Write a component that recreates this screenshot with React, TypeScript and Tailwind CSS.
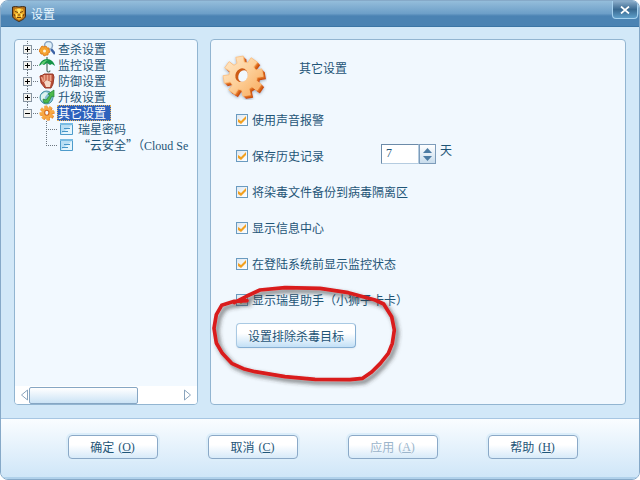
import React, { useState } from "react";
import clsx from "clsx";

const TREE = [
  { label: "查杀设置", Icon: ScanIcon },
  { label: "监控设置", Icon: UmbrellaIcon },
  { label: "防御设置", Icon: GloveIcon },
  { label: "升级设置", Icon: GlobeIcon },
  { label: "其它设置", Icon: SmallGearIcon },
];

const OPTIONS = [
  "使用声音报警",
  "保存历史记录",
  "将染毒文件备份到病毒隔离区",
  "显示信息中心",
  "在登陆系统前显示监控状态",
  "显示瑞星助手（小狮子卡卡）",
];

const ACTIONS = [
  { label: "确定", hotkey: "O" },
  { label: "取消", hotkey: "C" },
  { label: "应用", hotkey: "A", disabled: true },
  { label: "帮助", hotkey: "H" },
];

// eight-toothed gear around 24,24
function gearPath(outer: number, inner: number) {
  const at = (r: number, deg: number) => {
    const a = (deg * Math.PI) / 180;
    return `${(24 + r * Math.cos(a)).toFixed(1)} ${(24 + r * Math.sin(a)).toFixed(1)}`;
  };
  const points: string[] = [];
  for (let i = 0; i < 8; i++) {
    const mid = -100 + i * 45;
    points.push(at(inner, mid - 15), at(outer, mid - 11), at(outer, mid + 11), at(inner, mid + 15));
  }
  return `M${points.join("L")}z`;
}

const GEAR = gearPath(20, 14);

function LionIcon() {
  return (
    <svg className="h-4 w-4" viewBox="0 0 16 16" aria-hidden>
      <path d="M1.500 1l3-.5L8 1l3.500-.5 3 .5v9c0 2-3 4-6.500 5.500C4.500 14 1.500 12 1.500 10z" fill="#b8731a" stroke="#3d2a1a" />
      <path d="M4 3l4-1 4 1 1 4-2 5-3 2-3-2-2-5z" fill="#f2b42c" />
      <path d="M6 3h4l-1 4H7zM5 8h1v3H5zM10 8h1v3h-1z" fill="#ffe36a" />
      <path d="M4 5.500l3 1M12 5.500l-3 1M7 9h2M6 11.500h4M3 8l1 2M13 8l-1 2" stroke="#6f400e" fill="none" />
    </svg>
  );
}

function ScanIcon() {
  return (
    <svg className="h-4 w-4 shrink-0" viewBox="0 0 16 16" aria-hidden>
      <path d="M12 8l4 5" stroke="#3c62a5" strokeWidth="2.500" />
      <circle cx="9.500" cy="4.500" r="4" fill="#dff0fa" stroke="#8ba6c4" strokeWidth="1.500" />
      <path d="M3 5l2 1 2-1 1 2 2 0v2l1 2-2 1v2l-2 0-2 1-1-2-2 0-1-2-1-1 1-2z" fill="#f6a42f" stroke="#dc7f20" />
      <circle cx="5.500" cy="10" r="1.500" fill="#fff4d8" />
    </svg>
  );
}

function UmbrellaIcon() {
  return (
    <svg className="h-4 w-4 shrink-0" viewBox="0 0 16 16" aria-hidden>
      <path d="M8 0v13.500c0 2 3 2 3 0" fill="none" stroke="#4d6a62" strokeWidth="1.200" />
      <path d="M0 9c1-4 4-7 8-7s7 3 8 7l-3-2-2 1-3-2-3 2-2-1z" fill="#159447" />
      <path d="M2 7c2-3 4-4 7-4-2 1-3 2-4 4z" fill="#62cf70" />
    </svg>
  );
}

function GloveIcon() {
  return (
    <svg className="h-4 w-4 shrink-0" viewBox="0 0 16 16" aria-hidden>
      <path d="M1 3l3-1 1-1 9 0 1 3-1 7-2 4H6L2 10z" fill="#b94d37" stroke="#963a28" />
      <path d="M5.500 2v6M8.500 2v5M11.500 2v6" stroke="#eda78b" strokeWidth="2" />
      <path d="M2.500 4l2 5" stroke="#eda78b" strokeWidth="1.500" />
      <path d="M5 9l3-2 4 2-1 5H7z" fill="#f5d8c6" />
    </svg>
  );
}

function GlobeIcon() {
  return (
    <svg className="h-4 w-4 shrink-0" viewBox="0 0 16 16" aria-hidden>
      <circle cx="7.500" cy="8.500" r="6.500" fill="#85bfd2" stroke="#4896a2" />
      <path d="M2 6l4-3 3 1-3 4-1 4-3-1z" fill="#ddf3ef" />
      <path d="M5 14l-1-4 3 1 4-5-2-1 6-4v7l-2-1-4 7z" fill="#4dba4b" stroke="#21813a" strokeWidth=".7" />
    </svg>
  );
}

function SmallGearIcon() {
  return (
    <svg className="h-4 w-4 shrink-0" viewBox="2 2 45 45" aria-hidden>
      <path d={GEAR} fill="#dc7620" transform="translate(2 2)" />
      <path d={GEAR} fill="#f8a944" stroke="#f8a944" strokeWidth="2" />
      <ellipse cx="24" cy="24" rx="6" ry="7" fill="#f2f9ff" stroke="#d2651c" strokeWidth="3" />
    </svg>
  );
}

function LargeGearIcon() {
  return (
    <svg className="size-12" viewBox="0 0 48 48" aria-hidden>
      <defs>
        <linearGradient id="gearFace" x1="0" y1="0" x2="1" y2="1">
          <stop offset="0" stopColor="#ffe9cb" />
          <stop offset=".5" stopColor="#fdd09a" />
          <stop offset="1" stopColor="#f8a95a" />
        </linearGradient>
        <filter id="gearShadow" x="-20%" y="-20%" width="140%" height="140%">
          <feDropShadow dx="0" dy="1" stdDeviation="1.500" floodColor="#6c8496" floodOpacity=".6" />
        </filter>
      </defs>
      <g filter="url(#gearShadow)">
        <path d={GEAR} fill="#c9520f" transform="translate(3 3)" />
        <path d={GEAR} fill="#da6519" transform="translate(2 2)" />
        <path d={GEAR} fill="#e9863a" transform="translate(1 1)" />
        <path d={GEAR} fill="url(#gearFace)" stroke="#fbbf7e" strokeWidth=".8" strokeLinejoin="round" />
      </g>
      <ellipse cx="22.500" cy="23" rx="6" ry="7" fill="#cd5c16" transform="rotate(25 22 23)" />
      <ellipse cx="24" cy="24" rx="4.500" ry="6" fill="#f1f8fe" transform="rotate(25 24 24)" />
    </svg>
  );
}

function PageIcon() {
  return (
    <svg className="h-4 w-4 shrink-0" viewBox="0 0 16 16" aria-hidden>
      <path d="M2.500 2.500h12v11h-12z" fill="#b8def4" stroke="#4d9bcb" />
      <path d="M2 2h13v2H2z" fill="#78bbe2" />
      <path d="M3 13L14 4v9z" fill="#e4f5fd" />
      <path d="M6 7.500h6M4 10.500h6" stroke="#4595c8" />
    </svg>
  );
}

function Expander({ open, last }: { open: boolean; last: boolean }) {
  return (
    <svg className="h-4 w-4 shrink-0" viewBox="0 0 16 16" aria-hidden>
      <path d={last ? "M4.500 0v4" : "M4.500 0v4M4.500 13v3"} stroke="#6d7780" strokeDasharray="1 1" />
      <path d="M10 8.500h6" stroke="#6d7780" strokeDasharray="1 1" />
      <rect x=".5" y="4.500" width="8" height="8" fill="#f4f4f0" stroke="#8795a2" />
      <path d={open ? "M2 8.500h5" : "M2 8.500h5M4.500 6v5"} stroke="#000" />
    </svg>
  );
}

function ChildLine({ last }: { last: boolean }) {
  return (
    <svg className="h-4 w-3 shrink-0" viewBox="0 0 12 16" aria-hidden>
      <path d={last ? "M.5 0v9" : "M.5 0v16"} stroke="#6d7780" strokeDasharray="1 1" />
      <path d="M0 8.500h12" stroke="#6d7780" strokeDasharray="1 1" />
    </svg>
  );
}

function SettingsTree() {
  const [selected, setSelected] = useState("其它设置");

  return (
    <nav className="flex w-[184px] shrink-0 flex-col overflow-hidden rounded border border-[#92b5d1] bg-[#f2f9ff]" aria-label="设置">
      <ul className="flex-1 overflow-hidden pl-2 pt-px">
        {TREE.map(({ label, Icon }, i) => (
          <li key={label}>
            <div className="flex h-4 items-center">
              <Expander open={i === 4} last={i === 4} />
              <Icon />
              <button
                type="button"
                onClick={() => setSelected(label)}
                className={clsx(
                  "ml-0.5 h-4 border border-dotted pr-1 leading-[14px]",
                  selected === label ? "border-[#e6b45c] bg-[#2d62bd] text-white" : "border-transparent",
                )}
              >
                {label}
              </button>
            </div>
          </li>
        ))}
        <li className="flex h-4 items-center whitespace-nowrap pl-[23px]">
          <ChildLine last={false} />
          <PageIcon />
          <span className="ml-1 leading-4">瑞星密码</span>
        </li>
        <li className="flex h-4 items-center whitespace-nowrap pl-[23px]">
          <ChildLine last />
          <PageIcon />
          <span className="ml-1 leading-4">
            “云安全”（<span className="font-['Liberation_Serif',serif]">Cloud Se</span>
          </span>
        </li>
      </ul>
      <div className="flex h-[18px] items-center bg-white px-1">
        <button type="button" aria-label="向左滚动">
          <svg className="h-3 w-[10px]" viewBox="0 0 10 12" aria-hidden>
            <path d="M8.500 1v10L2.500 6z" fill="#fff" stroke="#8aa4bd" />
          </svg>
        </button>
        <div className="h-[17px] w-[109px] rounded-xs border border-[#86a6c3] bg-linear-to-b from-white to-[#cbe3f5]" />
        <button type="button" aria-label="向右滚动" className="ml-auto">
          <svg className="h-3 w-[10px]" viewBox="0 0 10 12" aria-hidden>
            <path d="M1.500 1v10l6-5z" fill="#fff" stroke="#8aa4bd" />
          </svg>
        </button>
      </div>
    </nav>
  );
}

function Option({ label }: { label: string }) {
  const [checked, setChecked] = useState(true);

  return (
    <label className="flex items-center gap-1">
      <span className="grid">
        <input
          type="checkbox"
          checked={checked}
          onChange={(e) => setChecked(e.target.checked)}
          className="size-3 appearance-none border border-[#6a9bc0] bg-linear-to-br from-[#dfe8f0] to-white [grid-area:1/1]"
        />
        {checked && (
          <svg className="pointer-events-none size-3 [grid-area:1/1]" viewBox="0 0 12 12" aria-hidden>
            <path d="M2 5l3 2 5-5v3l-5 5-3-2z" fill="#f2a01f" />
          </svg>
        )}
      </span>
      {label}
    </label>
  );
}

function DaysInput() {
  const [days, setDays] = useState(7);

  return (
    <div className="mb-1 flex items-center">
      <input
        id="days"
        value={days}
        onChange={(e) => setDays(Number(e.target.value) || 0)}
        className="h-5 w-[38px] border border-[#b5cce0] border-l-[#6c8ba9] border-t-[#6c8ba9] bg-white px-1 pb-0.5 font-['Liberation_Serif',serif]"
      />
      <div className="flex h-5 w-[17px] flex-col items-center justify-center gap-px border border-[#7d9cba] bg-linear-to-b from-white to-[#c8dcec]">
        <button type="button" aria-label="增加" onClick={() => setDays(days + 1)}>
          <svg className="block h-2 w-[11px]" viewBox="0 0 11 8" aria-hidden>
            <path d="M1 7l4.500-5L10 7z" fill="#4c7ba3" />
          </svg>
        </button>
        <button type="button" aria-label="减少" onClick={() => setDays(Math.max(0, days - 1))}>
          <svg className="block h-2 w-[11px]" viewBox="0 0 11 8" aria-hidden>
            <path d="M1 1l4.500 5L10 1z" fill="#4c7ba3" />
          </svg>
        </button>
      </div>
      <label htmlFor="days" className="mb-2 ml-1">天</label>
    </div>
  );
}

function MarkerLoop() {
  return (
    <svg className="pointer-events-none absolute -left-7 -top-[43px] h-[110px] w-[195px]" viewBox="9 330 585 330" aria-hidden>
      <defs>
        <filter id="markerShadow" x="-10%" y="-10%" width="125%" height="125%">
          <feDropShadow dx="8" dy="9" stdDeviation="6" floodColor="#333" floodOpacity=".7" />
        </filter>
      </defs>
      <path
        d="M126 392L88 394L50 406L34 434L27 475L34 519L52 550L80 580L115 596L150 605L240 620L330 628L435 629L473 625L500 606L526 580L550 550L562 520L568 480L560 440L536 402L510 390L480 382L430 368L345 355L240 353L165 360L126 378L88 398"
        fill="none"
        stroke="#d91a1c"
        strokeWidth="11"
        strokeLinecap="round"
        strokeLinejoin="round"
        filter="url(#markerShadow)"
      />
    </svg>
  );
}

export default function App() {
  return (
    <div
      lang="zh-CN"
      className="flex min-h-screen flex-col overflow-hidden rounded-lg border border-[#86a9c8] bg-[#d2e8f8] font-['Noto_Sans_CJK_SC',sans-serif] text-[12px] leading-4 text-[#1f5577]"
    >
      <header className="flex h-[26px] items-start justify-between border-b border-[#3c76a6] bg-linear-to-b from-[#94bddb] from-0% via-[#6d9fc8] via-50% to-[#4b83b3] to-60% pl-[10px] pr-px">
        <h1 className="flex h-[25px] items-center gap-1 text-[#e8f7ff]">
          <LionIcon />
          设置
        </h1>
        <button
          type="button"
          aria-label="关闭"
          className="flex h-[18px] w-[26px] items-center justify-center rounded-b border border-t-0 border-[#a5d1ee] bg-linear-to-b from-[#8caecb] from-0% via-[#396990] via-50% to-[#5f9fca]"
        >
          <svg className="h-2 w-[10px]" viewBox="0 0 10 8" aria-hidden>
            <path d="M1 .5l8 7M9 .5l-8 7" stroke="#fff" strokeWidth="1.700" />
          </svg>
        </button>
      </header>

      <main className="flex flex-1 gap-3 px-[13px] pb-[13px] pt-3">
        <SettingsTree />
        <section className="flex-1 rounded border border-[#92b5d1] bg-[#f1f8fe]">
          <div className="flex h-[62px] items-start gap-8 pl-2 pt-3">
            <LargeGearIcon />
            <h2 className="pt-2">其它设置</h2>
          </div>
          <div className="flex flex-col items-start pl-[25px]">
            {OPTIONS.map((label, i) => (
              <div key={label} className="flex h-9 items-center">
                {i === 1 ? (
                  <>
                    <div className="w-[145px]">
                      <Option label={label} />
                    </div>
                    <DaysInput />
                  </>
                ) : (
                  <Option label={label} />
                )}
              </div>
            ))}
            <div className="relative mt-[5px]">
              <button
                type="button"
                className="h-[25px] w-[120px] rounded border border-[#a9c9e3] border-b-[#86afd3] border-r-[#86afd3] bg-linear-to-b from-white from-40% to-[#c3e0f6] shadow-xs"
              >
                设置排除杀毒目标
              </button>
              <MarkerLoop />
            </div>
          </div>
        </section>
      </main>

      <footer className="flex h-[61px] items-start justify-center gap-[50px] border-t border-[#a7c6e2] border-b-2 border-b-[#b0d1eb] bg-linear-to-b from-[#fafdff] to-[#cfe6f8] pl-[5px] pt-4">
        {ACTIONS.map(({ label, hotkey, disabled }) => (
          <button
            key={hotkey}
            type="button"
            disabled={disabled}
            className="flex h-6 w-[90px] items-center justify-center gap-1 rounded border border-[#8ba9c7] bg-linear-to-b from-white from-40% to-[#d7eaf9] ring-2 ring-[#dceefa] disabled:text-[#9cb5cb]"
          >
            {label}
            <span className="font-['Liberation_Serif',serif]">
              (<u>{hotkey}</u>)
            </span>
          </button>
        ))}
      </footer>
    </div>
  );
}
